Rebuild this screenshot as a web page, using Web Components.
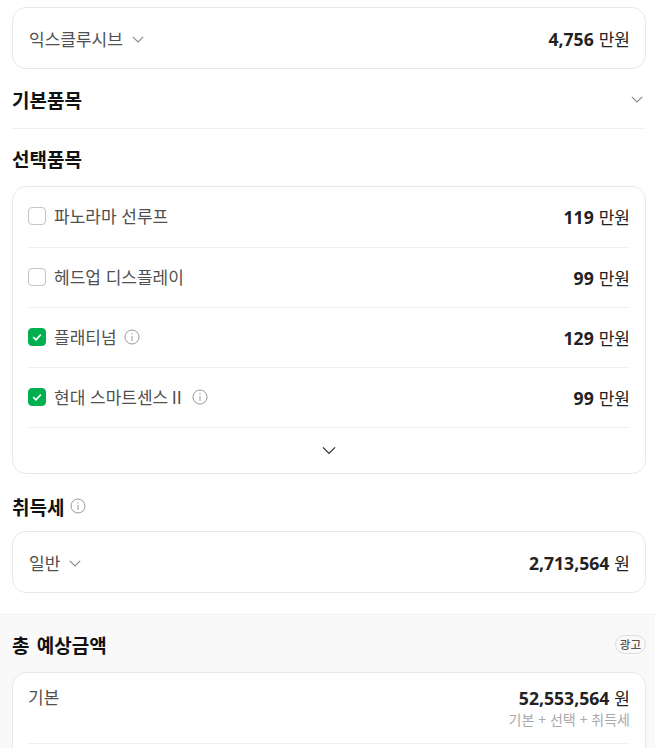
<!DOCTYPE html>
<html lang="ko">
<head>
<meta charset="utf-8">
<title>예상금액</title>
<style>
	html, body {
		margin: 0;
		height: 748px;
		overflow: hidden;
		background: #fff;
		font-family: "Noto Sans CJK KR", "Noto Sans", sans-serif;
		color: #222;
	}
	body { padding-top: 7px; box-sizing: border-box; }
</style>
</head>
<body>

<price-card>
	<price-row select price="4,756" unit="만원">익스클루시브</price-row>
</price-card>
<section-title collapsible>기본품목</section-title>
<section-title>선택품목</section-title>
<price-card expandable>
	<price-row check price="119" unit="만원">파노라마 선루프</price-row>
	<price-row check price="99" unit="만원">헤드업 디스플레이</price-row>
	<price-row check checked info price="129" unit="만원">플래티넘</price-row>
	<price-row check checked info price="99" unit="만원">현대 스마트센스Ⅱ</price-row>
</price-card>
<section-title info plain>취득세</section-title>
<price-card>
	<price-row select price="2,713,564" unit="원">일반</price-row>
</price-card>
<total-panel>
	<price-card flat>
		<price-row top price="52,553,564" unit="원" note="기본 + 선택 + 취득세">기본</price-row>
	</price-card>
</total-panel>

<script>
const CHEVRON = `<svg viewBox="0 0 12 7" width="12" height="7" fill="none" stroke="currentColor" stroke-width="1.1"><path d="M.8 .8 6 6 11.2 .8"/></svg>`;
const INFO = `<svg viewBox="0 0 16 16" width="16" height="16" fill="none" stroke="#999" stroke-width="1"><circle cx="8" cy="8" r="7"/><path d="M8 7v5M8 4.2v1.4"/></svg>`;
const TICK = `<svg viewBox="0 0 12 12" width="12" height="12" fill="none" stroke="#fff" stroke-width="1.6"><path d="M2.2 6.2 5 8.8 9.8 3.6"/></svg>`;

/**
 * A rounded white box holding rows.
 */
class PriceCard extends HTMLElement {
	constructor () {
		super();
		const more = this.hasAttribute("expandable")
			? `<div class="more">${CHEVRON.replace(/width="12" height="7"/, 'width="14" height="9"')}</div>`
			: "";
		this.attachShadow({mode: "open"}).innerHTML = `
			<style>
				:host {
					display: block;
					margin: 0 9px 0 12px;
					background: #fff;
					border: 1px solid #e8e8e8;
					border-radius: 14px;
					padding: 0 15px;
				}
				/* runs on below the bottom edge of the window */
				:host([flat]) { margin: 0; padding-bottom: 40px; }
				.more {
					height: 45px;
					border-top: 1px solid #f1f1f1;
					display: flex;
					align-items: center;
					justify-content: center;
					color: #333;
				}
			</style>
			<slot></slot>${more}
		`;
	}
}

/**
 * One line of a card: a label on the left, a price on the right.
 */
class PriceRow extends HTMLElement {
	constructor () {
		super();
		const box = this.hasAttribute("check")
			? `<span class="box ${this.hasAttribute("checked") ? "on" : ""}">${this.hasAttribute("checked") ? TICK : ""}</span>`
			: "";
		const arrow = this.hasAttribute("select") ? `<span class="arrow">${CHEVRON}</span>` : "";
		const info = this.hasAttribute("info") ? `<span class="info">${INFO}</span>` : "";
		const note = this.getAttribute("note");
		this.attachShadow({mode: "open"}).innerHTML = `
			<style>
				:host {
					display: flex;
					align-items: center;
					justify-content: space-between;
					height: 60px;
					box-sizing: border-box;
					border-top: 1px solid #f1f1f1;
					font-size: 17px;
				}
				:host(:first-child) { border-top: 0; }
				:host([select]) { padding: 2px 0 0 1px; }
				:host([top]) { align-items: flex-start; height: 71px; padding: 13px 0 0 0; border-bottom: 1px solid #f1f1f1; }
				.left { display: flex; align-items: center; color: #505050; line-height: 22px; }
				:host([check]) .left { margin-bottom: 2px; }
				.box {
					box-sizing: border-box;
					width: 18px;
					height: 18px;
					border: 1px solid #c4c4c4;
					border-radius: 4px;
					margin-right: 8px;
					display: flex;
					align-items: center;
					justify-content: center;
				}
				.box.on { background: #00b050; border-color: #00b050; }
				.arrow { display: flex; margin-left: 9px; color: #888; }
				.info { display: flex; margin-left: 7px; }
				.right { text-align: right; line-height: 22px; }
				.price {
					font: 700 17.6px "Open Sans", "Noto Sans", sans-serif;
					color: #222;
					margin-right: 5px;
				}
				.unit { color: #222; }
				.note { font-size: 14px; line-height: 18px; color: #aaa; }
			</style>
			<div class="left">${box}<slot></slot>${info}${arrow}</div>
			<div class="right">
				<div><span class="price">${this.getAttribute("price")}</span><span class="unit">${this.getAttribute("unit")}</span></div>
				${note ? `<div class="note">${note}</div>` : ""}
			</div>
		`;
	}
}

/**
 * A bold heading, optionally with an info mark or a collapse arrow.
 */
class SectionTitle extends HTMLElement {
	constructor () {
		super();
		const info = this.hasAttribute("info") ? `<span class="info">${INFO}</span>` : "";
		const arrow = this.hasAttribute("collapsible") ? `<span class="arrow">${CHEVRON}</span>` : "";
		this.attachShadow({mode: "open"}).innerHTML = `
			<style>
				:host {
					display: flex;
					align-items: center;
					justify-content: space-between;
					box-sizing: border-box;
					height: 57px;
					padding-top: 2px;
					margin: 0 9px 0 12px;
					font-size: 19px;
					font-weight: 700;
					color: #111;
				}
				:host([collapsible]) { height: 60px; padding-top: 2px; border-bottom: 1px solid #f1f1f1; }
				:host([plain]) { padding-top: 7px; }
				.l { display: flex; align-items: center; }
				.info { display: flex; margin-left: 6px; }
				.arrow { display: flex; color: #888; margin-right: 3px; }
			</style>
			<div class="l"><slot></slot>${info}</div>${arrow}
		`;
	}
}

/**
 * The grey block at the bottom with the total.
 */
class TotalPanel extends HTMLElement {
	constructor () {
		super();
		this.attachShadow({mode: "open"}).innerHTML = `
			<style>
				:host {
					display: block;
					margin-top: 21px;
					background: #f9f9f9;
					border-top: 1px solid #f1f1f1;
					padding: 0 9px 0 12px;
				}
				.head {
					box-sizing: border-box;
					height: 57px;
					padding-top: 1px;
					display: flex;
					align-items: center;
					justify-content: space-between;
					font-size: 19px;
					font-weight: 700;
					color: #111;
					word-spacing: 2px;
				}
				.ad {
					font-size: 11.5px;
					font-weight: 500;
					color: #555;
					border: 1px solid #ddd;
					border-radius: 10px;
					padding: 0 4px;
					line-height: 17px;
					margin-top: 1px;
				}
			</style>
			<div class="head"><span>총 예상금액</span><span class="ad">광고</span></div>
			<slot></slot>
		`;
	}
}

customElements.define("price-card", PriceCard);
customElements.define("price-row", PriceRow);
customElements.define("section-title", SectionTitle);
customElements.define("total-panel", TotalPanel);
</script>
</body>
</html>
